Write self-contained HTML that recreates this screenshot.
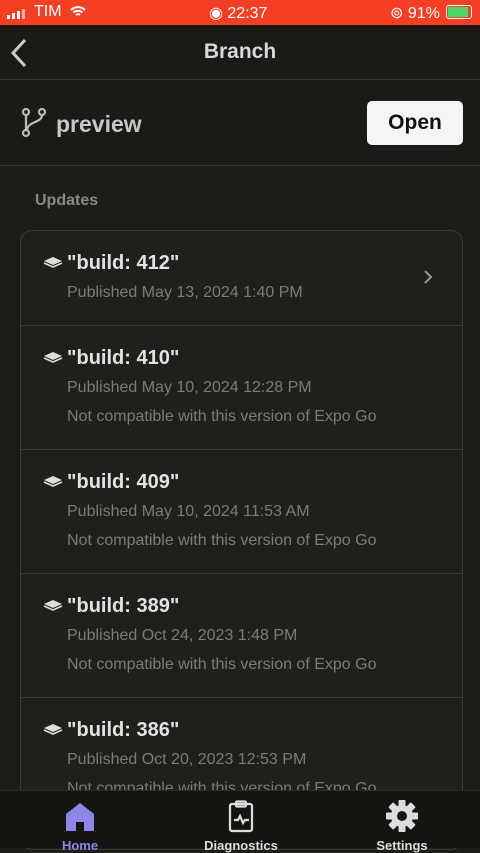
<!DOCTYPE html>
<html><head><meta charset="utf-8"><style>
*{box-sizing:border-box;margin:0;padding:0}
body{width:480px;height:848px;overflow:hidden;background:#1c1d18;font-family:"Liberation Sans",sans-serif;position:relative;color:#ddd}
.sb{position:absolute;top:0;left:0;width:480px;height:25px;background:#f43f24;color:#fff;font-size:16px}
.hdr{position:absolute;top:25px;left:0;width:480px;height:55px;border-bottom:1px solid #34352a;background:#1a1b17}
.hdr .t{position:absolute;left:0;right:0;top:15px;text-align:center;font-size:21px;font-weight:bold;color:#d8d8d8}
.br{position:absolute;top:80px;left:0;width:480px;height:86px;border-bottom:1px solid #34352a;background:#1a1b17}
.open{position:absolute;left:367px;top:21px;width:96px;height:44px;background:#f5f5f5;border-radius:5px;color:#111;font-size:21px;font-weight:bold;text-align:center;line-height:44px}
.upd{position:absolute;left:35px;top:192px;font-size:16px;font-weight:bold;color:#8a8a82}
.card{position:absolute;left:20px;top:230px;width:443px;height:620px;border:1px solid #3a3b30;border-radius:12px;background:#1f201b}
.row{position:absolute;left:0;width:441px;border-bottom:1px solid #3a3b30}
.ti{position:absolute;left:46px;font-size:20px;font-weight:bold;color:#e2e2e2}
.ic{position:absolute;left:22px}
.s{position:absolute;left:46px;font-size:16px;color:#7d7d76}
.tab{position:absolute;left:0;top:790px;width:480px;height:58px;background:#141511;border-top:1px solid #2b2c25}
.tl{position:absolute;top:47px;font-size:13px;font-weight:bold;text-align:center;width:120px}
</style></head><body>
<div class="sb">
<div style="position:absolute;left:7px;top:9px;display:flex;gap:2px;align-items:flex-end"><i style="width:3px;height:4px;background:#fff"></i><i style="width:3px;height:6px;background:#fff"></i><i style="width:3px;height:8px;background:#fff"></i><i style="width:3px;height:10px;background:#ffb0a0"></i></div>
<span style="position:absolute;left:34px;top:3px">TIM</span>
<svg style="position:absolute;left:70px;top:6px" width="16" height="12" viewBox="0 0 16 12"><path d="M1 4a10 10 0 0 1 14 0M3.5 6.5a6.5 6.5 0 0 1 9 0M6 9a3 3 0 0 1 4 0" stroke="#fff" stroke-width="2" fill="none"/></svg>
<span style="position:absolute;left:209px;top:3px">◉ 22:37</span>
<span style="position:absolute;left:390px;top:3px">⊚ 91%</span>
<div style="position:absolute;left:446px;top:5px;width:26px;height:14px;border:1px solid #fff;border-radius:3px;padding:1px"><div style="width:90%;height:100%;background:#4cd964;border-radius:1px"></div></div>
</div>
<div class="hdr"><svg style="position:absolute;left:9px;top:13px" width="20" height="30" viewBox="0 0 20 30"><path d="M16 2L4 15l12 13" stroke="#ccc" stroke-width="3" fill="none"/></svg><div class="t">Branch</div></div>
<div class="br">
<svg style="position:absolute;left:21px;top:28px" width="26" height="30" viewBox="0 0 26 30" fill="none" stroke="#bbb" stroke-width="2.2"><circle cx="5" cy="4" r="3"/><circle cx="5" cy="25" r="3"/><circle cx="21" cy="4" r="3"/><path d="M5 7v15M21 7c0 8-14 6-15 15"/></svg>
<div style="position:absolute;left:56px;top:31px;font-size:23px;font-weight:bold;color:#c8c8c8">preview</div>
<div class="open">Open</div></div>
<div class="upd">Updates</div>
<div class="card">
<div class="row" style="top:0;height:95px"><svg class="ic" style="top:25px" width="20" height="12" viewBox="0 0 20 12"><path d="M10 1l9 4-9 4-9-4z" fill="#ddd"/><path d="M1 7l9 4 9-4" stroke="#ddd" stroke-width="1.6" fill="none"/></svg><div class="ti" style="top:21px">"build: 412"</div><div class="s" style="top:53px">Published May 13, 2024 1:40 PM</div><svg style="position:absolute;left:402px;top:38px" width="10" height="16" viewBox="0 0 10 16"><path d="M2 2l6 6-6 6" stroke="#999" stroke-width="2" fill="none"/></svg></div>
<div class="row" style="top:95px;height:124px"><svg class="ic" style="top:25px" width="20" height="12" viewBox="0 0 20 12"><path d="M10 1l9 4-9 4-9-4z" fill="#ddd"/><path d="M1 7l9 4 9-4" stroke="#ddd" stroke-width="1.6" fill="none"/></svg><div class="ti" style="top:21px">"build: 410"</div><div class="s" style="top:53px">Published May 10, 2024 12:28 PM</div><div class="s" style="top:82px">Not compatible with this version of Expo Go</div></div>
<div class="row" style="top:219px;height:124px"><svg class="ic" style="top:25px" width="20" height="12" viewBox="0 0 20 12"><path d="M10 1l9 4-9 4-9-4z" fill="#ddd"/><path d="M1 7l9 4 9-4" stroke="#ddd" stroke-width="1.6" fill="none"/></svg><div class="ti" style="top:21px">"build: 409"</div><div class="s" style="top:53px">Published May 10, 2024 11:53 AM</div><div class="s" style="top:82px">Not compatible with this version of Expo Go</div></div>
<div class="row" style="top:343px;height:124px"><svg class="ic" style="top:25px" width="20" height="12" viewBox="0 0 20 12"><path d="M10 1l9 4-9 4-9-4z" fill="#ddd"/><path d="M1 7l9 4 9-4" stroke="#ddd" stroke-width="1.6" fill="none"/></svg><div class="ti" style="top:21px">"build: 389"</div><div class="s" style="top:53px">Published Oct 24, 2023 1:48 PM</div><div class="s" style="top:82px">Not compatible with this version of Expo Go</div></div>
<div class="row" style="top:467px;height:124px"><svg class="ic" style="top:25px" width="20" height="12" viewBox="0 0 20 12"><path d="M10 1l9 4-9 4-9-4z" fill="#ddd"/><path d="M1 7l9 4 9-4" stroke="#ddd" stroke-width="1.6" fill="none"/></svg><div class="ti" style="top:21px">"build: 386"</div><div class="s" style="top:53px">Published Oct 20, 2023 12:53 PM</div><div class="s" style="top:82px">Not compatible with this version of Expo Go</div></div>
</div>
<div class="tab">
<svg style="position:absolute;left:65px;top:11px" width="30" height="29" viewBox="0 0 30 29"><path d="M15 1L1 12v17h10v-9h8v9h10V12z" fill="#8c86e6"/></svg>
<div class="tl" style="left:20px;color:#8c86e6">Home</div>
<svg style="position:absolute;left:228px;top:9px" width="26" height="33" viewBox="0 0 26 33" fill="none" stroke="#ddd" stroke-width="2.2"><rect x="2" y="4" width="22" height="27" rx="2"/><rect x="8" y="1.5" width="10" height="5" rx="1"/><path d="M6 20h4l2-4 3 7 2-3h4"/></svg>
<div class="tl" style="left:181px;color:#ddd">Diagnostics</div>
<svg style="position:absolute;left:386px;top:9px" width="32" height="32" viewBox="0 0 32 32"><g fill="#ddd" transform="translate(16 16)"><circle r="11"/><rect x="-3.5" y="-16" width="7" height="32" rx="1"/><rect x="-3.5" y="-16" width="7" height="32" rx="1" transform="rotate(45)"/><rect x="-3.5" y="-16" width="7" height="32" rx="1" transform="rotate(90)"/><rect x="-3.5" y="-16" width="7" height="32" rx="1" transform="rotate(135)"/></g><circle cx="16" cy="16" r="5" fill="#141511"/></svg>
<div class="tl" style="left:342px;color:#ddd">Settings</div>
</div>
</body></html>
